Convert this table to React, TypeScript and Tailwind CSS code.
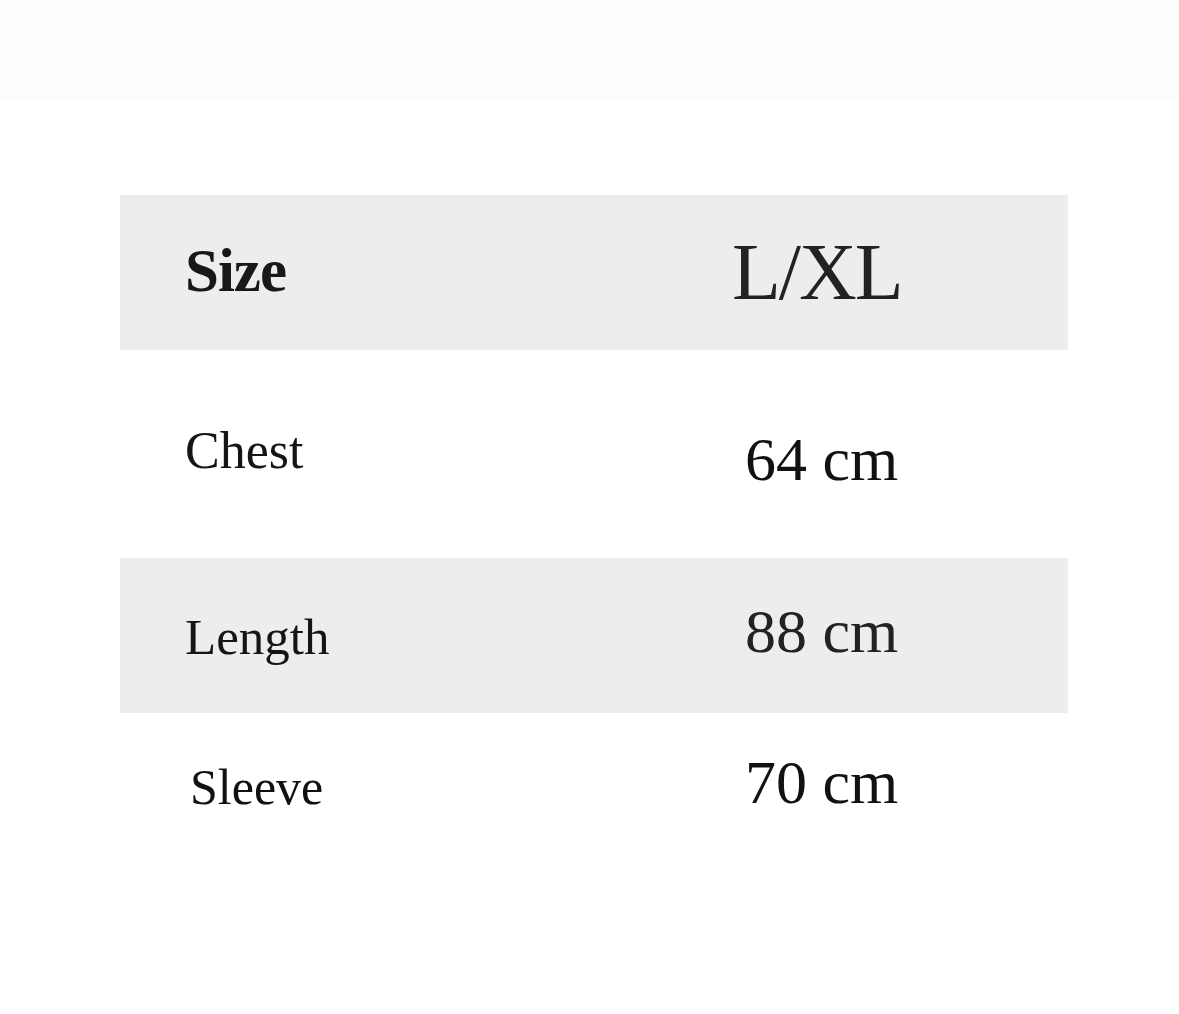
const serif = "font-['Liberation_Serif','Times_New_Roman',serif]";

type Row = {
  label: string;
  value: string;
  shaded: boolean;
  height: string;
  labelCls: string;
  valueCls: string;
};

const rows: Row[] = [
  {
    label: 'Size',
    value: 'L/XL',
    shaded: true,
    height: 'h-[155px]',
    labelCls: 'pt-[45px] pl-[65px] text-[61px] font-bold text-[#181818] tracking-[-1px]',
    valueCls: 'pt-[37px] pl-0 text-[80px] text-[#222] tracking-[-2px]',
  },
  {
    label: 'Chest',
    value: '64 cm',
    shaded: false,
    height: 'h-[208px]',
    labelCls: 'pt-[75px] pl-[65px] text-[52px] text-[#151515]',
    valueCls: 'pt-[78px] pl-[13px] text-[62px] text-[#111]',
  },
  {
    label: 'Length',
    value: '88 cm',
    shaded: true,
    height: 'h-[155px]',
    labelCls: 'pt-[54px] pl-[65px] text-[51px] text-[#151515]',
    valueCls: 'pt-[42px] pl-[13px] text-[62px] text-[#222]',
  },
  {
    label: 'Sleeve',
    value: '70 cm',
    shaded: false,
    height: 'h-[150px]',
    labelCls: 'pt-[49px] pl-[70px] text-[50px] text-[#111]',
    valueCls: 'pt-[38px] pl-[13px] text-[62px] text-[#111]',
  },
];

export default function App() {
  return (
    <div className={`min-h-screen w-full bg-white ${serif}`}>
      <div className="h-[100px] bg-[#fdfdfd]" />
      <div className="pt-[95px] pl-[120px]">
        <div className="w-[948px] flex flex-col">
          {rows.map((r) => (
            <div
              key={r.label}
              className={`grid grid-cols-[612px_1fr] ${r.height} ${r.shaded ? 'bg-[#ededed]' : 'bg-white'}`}
            >
              <div className={`leading-none ${r.labelCls}`}>{r.label}</div>
              <div className={`leading-none ${r.valueCls}`}>{r.value}</div>
            </div>
          ))}
        </div>
      </div>
    </div>
  );
}
